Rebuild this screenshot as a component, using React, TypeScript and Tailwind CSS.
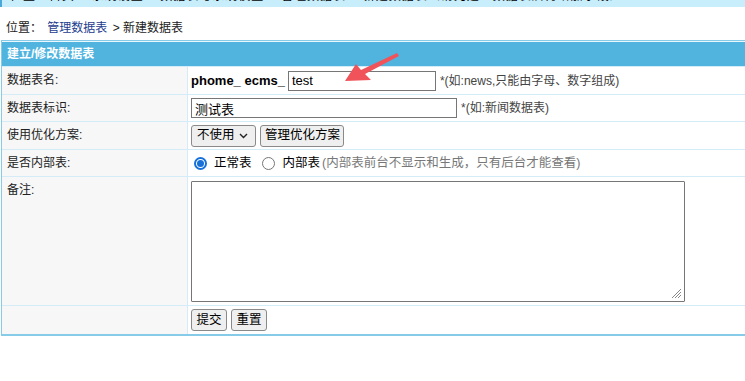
import React from "react";

const Row = ({ label, h, children }: { label: string; h: string; children?: React.ReactNode }) => (
  <div className={`flex border-t border-[#d3ecf7] ${h}`}>
    <div className="w-[186px] shrink-0 bg-[#f7f7f7] border-r border-[#d3ecf7] pl-[5px] pt-[5px] leading-[17px]">{label}</div>
    <div className="flex-1 flex items-center pl-[3px]">{children}</div>
  </div>
);

const Btn = ({ children, className = "" }: { children: React.ReactNode; className?: string }) => (
  <button className={`h-[22px] px-[4px] rounded-[3px] border border-[#8a8a8a] bg-[#efefef] text-[12.5px] text-black leading-none whitespace-nowrap ${className}`}>
    {children}
  </button>
);

export default function App() {
  return (
    <div
      className="relative w-[745px] h-[381px] overflow-hidden bg-white text-[12px] text-[#222]"
      style={{ fontFamily: '"Liberation Sans", "Noto Sans CJK SC", sans-serif' }}
    >
      {/* top bar, only its lower edge is on screen */}
      <div className="h-[7px] overflow-hidden bg-[#c8eefc] border-l-2 border-[#4aa8d8]">
        <div className="-mt-[13px] pl-[8px] whitespace-nowrap text-[12px] text-black tracking-[1px]">
          位置：首页 &gt; 系统设置 &gt; 数据表与系统模型 &gt; 管理数据表 &gt; 新建数据表（请先建立数据表后再增加字段）
        </div>
      </div>

      <div className="h-[33px] flex items-center pl-[6px] pt-[9px]">
        位置：&nbsp;
        <a className="text-[#1d3c8f] px-[2px]">管理数据表</a>
        <span>&nbsp;&gt; 新建数据表</span>
      </div>

      <div className="ml-[1px] w-[800px] border border-[#86cce8] border-b-2">
        <div className="h-[25px] bg-[#50b4df] text-white font-bold flex items-center pl-[5px] border-t border-[#eaf7fd]">
          建立/修改数据表
        </div>

        <Row label="数据表名:" h="h-[28px]">
          <span className="font-bold text-[13px] text-black">phome_ ecms_</span>
          <input
            defaultValue="test"
            className="ml-[3px] w-[148px] h-[20px] border border-[#767676] px-[3px] text-[13px] text-black outline-none"
          />
          <span className="ml-[4px] text-[#444]">*(如:news,只能由字母、数字组成)</span>
        </Row>

        <Row label="数据表标识:" h="h-[27px]">
          <input
            defaultValue="测试表"
            className="w-[266px] h-[20px] border border-[#767676] px-[3px] text-[13px] text-black outline-none"
          />
          <span className="ml-[4px] text-[#444]">*(如:新闻数据表)</span>
        </Row>

        <Row label="使用优化方案:" h="h-[28px]">
          <div className="w-[65px] h-[22px] rounded-[3px] border border-[#8a8a8a] bg-[#efefef] flex items-center justify-between pl-[5px] pr-[7px] text-black text-[12.5px]">
            <span>不使用</span>
            <svg width="9" height="6" viewBox="0 0 9 6" fill="none" stroke="#222" strokeWidth="1.4">
              <path d="M1 1l3.5 3.5L8 1" />
            </svg>
          </div>
          <Btn className="ml-[4px] w-[84px]">管理优化方案</Btn>
        </Row>

        <Row label="是否内部表:" h="h-[27px]">
          <div className="flex items-center pl-[3px]">
            <span className="w-[13px] h-[13px] rounded-full border-2 border-[#1670d8] flex items-center justify-center">
              <span className="w-[7px] h-[7px] rounded-full bg-[#1670d8]" />
            </span>
            <span className="ml-[7px] text-black text-[12.5px]">正常表</span>
            <span className="ml-[10px] w-[13px] h-[13px] rounded-full border border-[#767676]" />
            <span className="ml-[8px] text-black text-[12.5px]">内部表</span>
            <span className="ml-[2px] text-[#777] text-[12.5px]">(内部表前台不显示和生成，只有后台才能查看)</span>
          </div>
        </Row>

        <Row label="备注:" h="h-[129px]">
          <div className="self-start mt-[4px] relative w-[494px] h-[121px] border border-[#767676] rounded-[1px] bg-white">
            <svg className="absolute right-[2px] bottom-[2px]" width="11" height="11" viewBox="0 0 11 11" stroke="#888" strokeWidth="1">
              <path d="M10 1L1 10M10 4L4 10M10 7L7 10" />
            </svg>
          </div>
        </Row>

        <Row label="" h="h-[29px]">
          <Btn className="w-[36px]">提交</Btn>
          <Btn className="ml-[4px] w-[36px]">重置</Btn>
        </Row>
      </div>

      {/* red annotation arrow */}
      <svg className="absolute left-[340px] top-[50px]" width="64" height="36" viewBox="340 50 64 36">
        <polygon points="345,81 356,64 361,70 397,53 399,56 365,74 371,80" fill="#f0545a" />
      </svg>
    </div>
  );
}
